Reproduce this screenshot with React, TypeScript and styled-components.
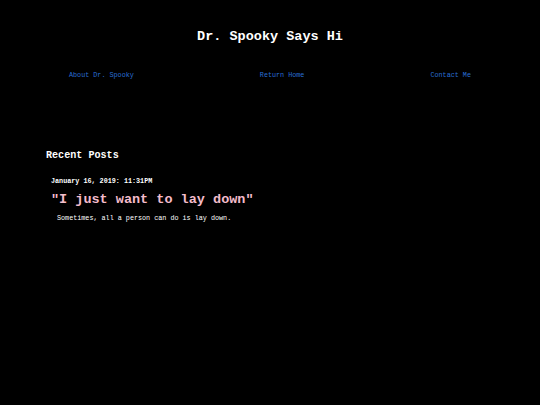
import React from 'react'
import styled, { createGlobalStyle } from 'styled-components'

const GlobalStyle = createGlobalStyle`
  html, body {
    margin: 0;
    background: #000;
    font-family: "Liberation Mono", "Courier New", monospace;
    color: #fff;
  }
`

const Page = styled.div`
  width: 540px;
  min-height: 405px;
  background: #000;
`

const Title = styled.h1`
  margin: 0;
  padding-top: 28px;
  text-align: center;
  font-size: 13.5px;
  line-height: 18px;
  font-weight: bold;
`

const Nav = styled.nav`
  display: flex;
  justify-content: space-around;
  padding: 0 6px;
  margin-top: 25px;
`

const NavLink = styled.a`
  color: #2a6fd6;
  text-decoration: none;
  font-size: 6.75px;
  line-height: 9px;
`

const Posts = styled.section`
  margin-top: 69px;
  padding-left: 46px;
`

const SectionTitle = styled.h2`
  margin: 0;
  font-size: 10.1px;
  line-height: 14px;
  font-weight: bold;
`

const Post = styled.article`
  padding-left: 5px;
  margin-top: 14px;
`

const PostDate = styled.div`
  font-size: 6.75px;
  line-height: 9px;
  font-weight: bold;
`

const PostTitle = styled.h3`
  margin: 5px 0 0;
  color: #f4bccb;
  font-size: 13.5px;
  line-height: 18px;
  font-weight: bold;
`

const PostBody = styled.p`
  margin: 5px 0 0;
  padding-left: 6px;
  font-size: 6.75px;
  line-height: 9px;
`

export default function App() {
  return (
    <Page>
      <GlobalStyle />
      <Title>Dr. Spooky Says Hi</Title>
      <Nav>
        <NavLink href="#">About Dr. Spooky</NavLink>
        <NavLink href="#">Return Home</NavLink>
        <NavLink href="#">Contact Me</NavLink>
      </Nav>
      <Posts>
        <SectionTitle>Recent Posts</SectionTitle>
        <Post>
          <PostDate>January 16, 2019: 11:31PM</PostDate>
          <PostTitle>"I just want to lay down"</PostTitle>
          <PostBody>Sometimes, all a person can do is lay down.</PostBody>
        </Post>
      </Posts>
    </Page>
  )
}
